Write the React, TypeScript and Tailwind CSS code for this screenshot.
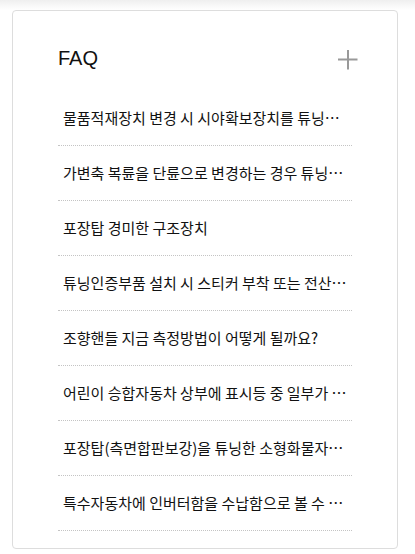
import React from "react";

const items = [
  "물품적재장치 변경 시 시야확보장치를 튜닝…",
  "가변축 복륜을 단륜으로 변경하는 경우 튜닝…",
  "포장탑 경미한 구조장치",
  "튜닝인증부품 설치 시 스티커 부착 또는 전산…",
  "조향핸들 지금 측정방법이 어떻게 될까요?",
  "어린이 승합자동차 상부에 표시등 중 일부가 …",
  "포장탑(측면합판보강)을 튜닝한 소형화물자…",
  "특수자동차에 인버터함을 수납함으로 볼 수 …",
];

export default function App() {
  return (
    <div className="w-[415px] h-[554px] bg-white overflow-hidden" style={{ fontFamily: '"Noto Sans CJK KR", "Noto Sans", sans-serif' }}>
      <div className="h-[10px] bg-gradient-to-b from-[#efefef] to-white" />
      <div className="ml-[12px] w-[386px] border border-[#dddddd] rounded-[4px] pt-[37px] pb-[17px]">
        <div className="flex items-start justify-between pl-[45px] pr-[39px] h-[20px]">
          <span className="text-[20px] leading-[20px] text-[#111]" style={{ fontFamily: '"Liberation Sans", Arial, sans-serif' }}>FAQ</span>
          <svg width="20" height="20" viewBox="0 0 20 20" className="mt-[2px]">
            <path d="M10 0V19.5M0 9.5H19.5" stroke="#999999" strokeWidth="2" fill="none" />
          </svg>
        </div>
        <ul className="mx-[45px] mt-[23px]">
          {items.map((t) => (
            <li key={t} className="h-[55px] flex items-center border-b border-dotted border-[#c4c4c4]">
              <span className="block whitespace-nowrap pl-[5px] text-[15px] leading-[20px] text-[#111]">{t}</span>
            </li>
          ))}
        </ul>
      </div>
    </div>
  );
}
